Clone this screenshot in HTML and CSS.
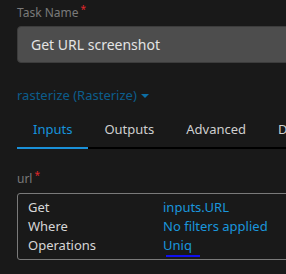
FILE: index.html
```html
<!DOCTYPE html>
<html lang="en">
<head>
    <meta charset="UTF-8">
    <title>Task</title>
    <link rel="stylesheet" href="styles.css">
</head>
<body>
    <div class="page">
        <label class="field-label">Task Name<span class="req">*</span></label>
        <div class="text-input">Get URL screenshot</div>

        <div class="command">rasterize (Rasterize)<span class="caret"></span></div>

        <div class="tabs">
            <div class="tab active">Inputs</div>
            <div class="tab">Outputs</div>
            <div class="tab">Advanced</div>
            <div class="tab">Details</div>
        </div>

        <label class="field-label arg-label">url<span class="req">*</span></label>
        <div class="arg-box">
            <div class="arg-row">
                <span class="arg-key">Get</span>
                <span class="arg-val">inputs.URL</span>
            </div>
            <div class="arg-row">
                <span class="arg-key">Where</span>
                <span class="arg-val">No filters applied</span>
            </div>
            <div class="arg-row">
                <span class="arg-key">Operations</span>
                <span class="arg-val"><span class="op">Uniq</span></span>
            </div>
        </div>
    </div>
</body>
</html>
```

FILE: styles.css
```css
html, body {
    margin: 0;
    background-color: #191919;
    overflow: hidden;
}
body {
    font-family: "Noto Sans", "Open Sans", sans-serif;
    width: 286px;
    height: 274px;
}
.page {
    padding: 5px 0 0 17px;
    width: 400px;
}
.field-label {
    display: block;
    font-size: 12px;
    line-height: 16px;
    color: #7a7a7a;
}
.req {
    color: #e0262b;
    font-size: 10px;
    vertical-align: top;
    position: relative;
    top: -4px;
    margin-left: 2px;
}
.text-input {
    margin-top: 5px;
    height: 35px;
    line-height: 35px;
    background-color: #4d4d4d;
    border: 1px solid #3c3c3c;
    border-radius: 4px;
    padding-left: 13px;
    font-size: 14px;
    color: #e4e4e4;
}
.command {
    margin-top: 23px;
    font-size: 13px;
    line-height: 18px;
    color: #0c5d8c;
}
.caret {
    display: inline-block;
    width: 0;
    height: 0;
    margin-left: 4px;
    vertical-align: 2px;
    border-left: 4px solid transparent;
    border-right: 4px solid transparent;
    border-top: 4px solid #0c6fa6;
}
.tabs {
    display: flex;
    margin-top: 7px;
    border-bottom: 2px solid #000000;
    white-space: nowrap;
}
.tab {
    padding: 9px 16px 9px;
    font-size: 13px;
    line-height: 18px;
    color: #cfcfcf;
    margin-bottom: -2px;
    border-bottom: 2px solid transparent;
}
.tab.active {
    color: #1693dc;
    border-bottom-color: #1a90d8;
}
.arg-label {
    margin-top: 22px;
}
.arg-box {
    margin-top: 6px;
    border: 1px solid #7a7a7a;
    border-radius: 3px;
    padding: 4px 10px 4px;
}
.arg-row {
    display: flex;
    font-size: 13px;
    line-height: 19px;
}
.arg-key {
    width: 135px;
    color: #d6d6d6;
}
.arg-val {
    color: #1a96dc;
}
.op {
    position: relative;
}
.op::after {
    content: "";
    position: absolute;
    left: 3px;
    bottom: -3px;
    width: 34px;
    height: 2px;
    background-color: #1010ee;
}
```
